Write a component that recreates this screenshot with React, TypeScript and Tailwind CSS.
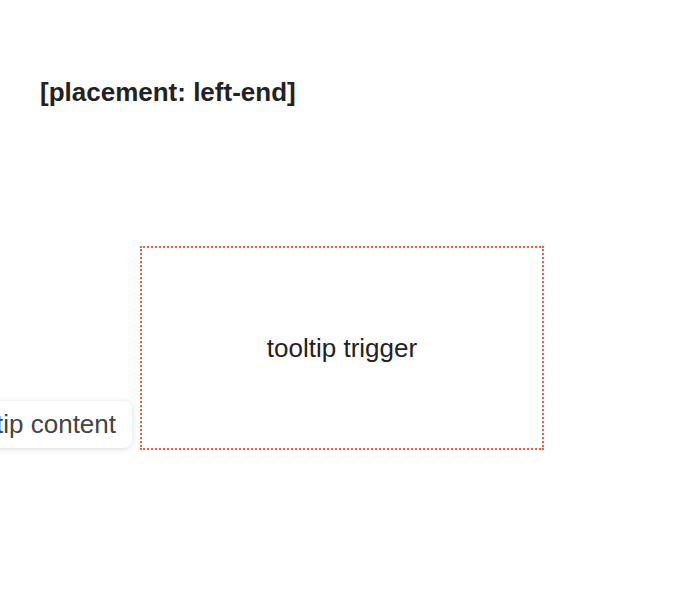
import React from 'react';

export default function App() {
  return (
    <main className="min-h-screen w-full bg-white overflow-hidden font-['Liberation_Sans',Arial,sans-serif] text-[#222]">
      <div className="px-10 pt-[77px]">
        <h2 className="text-[26px] font-bold leading-[1.2]">[placement: left-end]</h2>
      </div>

      <div className="flex justify-center mt-[138px]">
        {/* trigger */}
        <div className="relative w-[404px] h-[204px] border-2 border-dotted border-[#ff5a3c] flex items-center justify-center">
          <span className="text-[26px] text-[#222]">tooltip trigger</span>

          {/* tooltip */}
          <div className="absolute right-full mr-[10px] bottom-0 bg-white rounded-lg shadow-[0_1px_6px_rgba(0,0,0,0.15)] px-4 py-2 whitespace-nowrap">
            <span className="text-[26px] leading-[31px] text-[#444]">tooltip content</span>
          </div>
        </div>
      </div>
    </main>
  );
}
